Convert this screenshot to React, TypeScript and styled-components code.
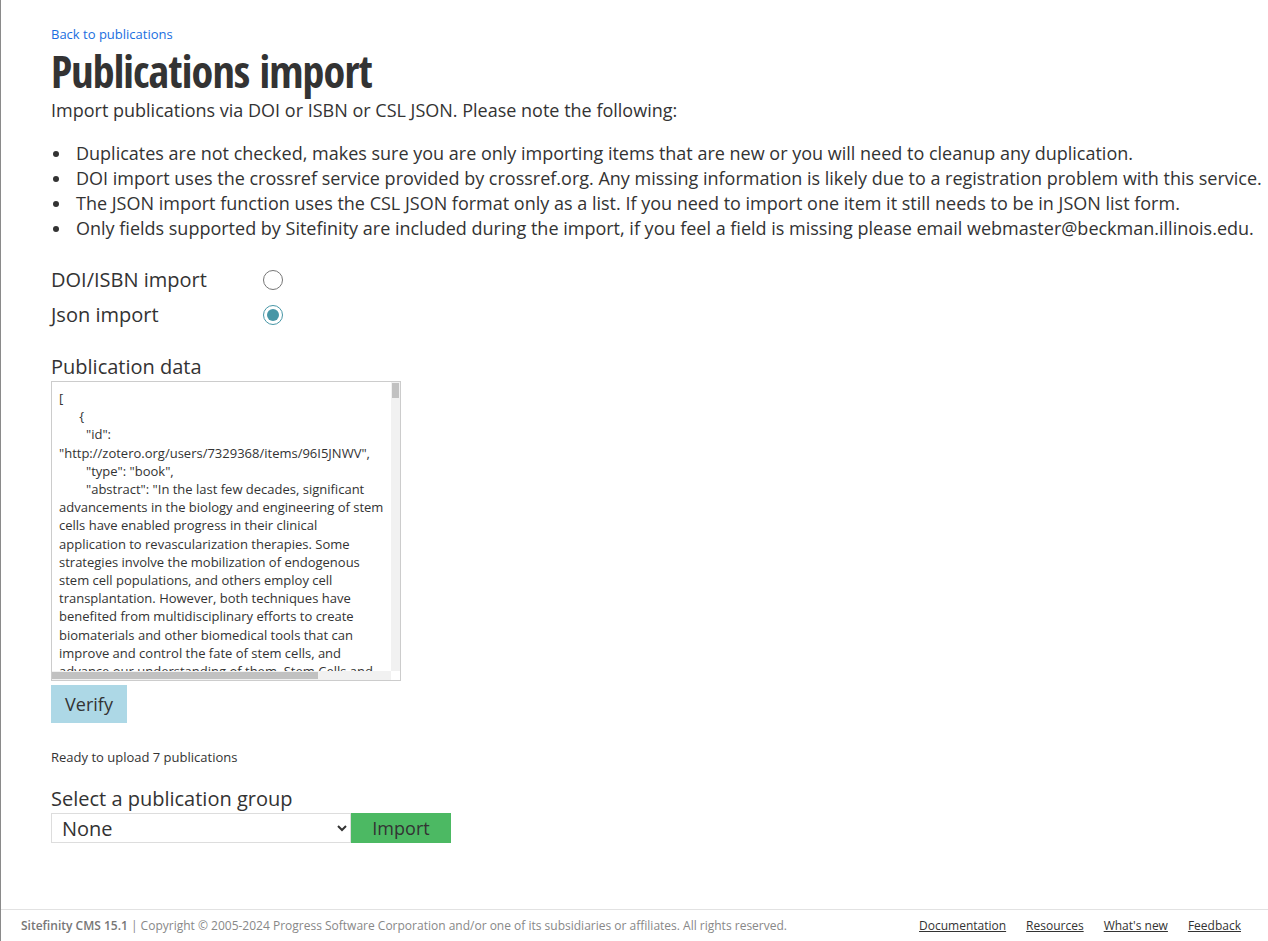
import React from "react";
import styled, { createGlobalStyle } from "styled-components";

const Global = createGlobalStyle`
  html, body { margin: 0; padding: 0; background: #fff; }
  body { font-family: "Open Sans", "Liberation Sans", sans-serif; color: #333; }
  * { box-sizing: border-box; }
`;

const Page = styled.div`
  min-height: 100vh;
  display: flex;
  flex-direction: column;
  border-left: 1px solid #8a8a8a;
`;

const Main = styled.main`
  flex: 1;
  padding: 25px 0 0 50px;
`;

const BackLink = styled.a`
  display: block;
  font-size: 13px;
  line-height: 18px;
  color: #1a6ee0;
  text-decoration: none;
`;

const Title = styled.h1`
  margin: 3px 0 2px;
  font-family: "Open Sans Condensed", "Open Sans", sans-serif;
  font-stretch: 75%;
  font-weight: 700;
  font-size: 44px;
  line-height: 50px;
  color: #333;
  letter-spacing: -0.85px;
`;

const Intro = styled.p`
  margin: 0;
  font-size: 18px;
  line-height: 25px;
`;

const Notes = styled.ul`
  margin: 18px 0 0;
  padding: 0;
  list-style: none;
  font-size: 18px;
  line-height: 25px;
`;

const Note = styled.li`
  display: flex;
  align-items: center;
  &::before {
    content: "";
    flex: none;
    width: 6px;
    height: 6px;
    border-radius: 50%;
    background: #333;
    margin: 1px 17px 0 2px;
  }
`;

const Options = styled.div`
  margin-top: 21px;
  display: flex;
  flex-direction: column;
`;

const OptionRow = styled.label`
  display: flex;
  align-items: center;
  height: 35px;
  font-size: 20px;
`;

const OptionText = styled.span`
  width: 212px;
`;

const Radio = styled.input.attrs({ type: "radio" })`
  appearance: none;
  margin: 0;
  width: 20px;
  height: 20px;
  border-radius: 50%;
  border: 1px solid #767676;
  background: #fff;
  display: grid;
  place-items: center;
  &:checked {
    border-color: #4796a6;
  }
  &:checked::after {
    content: "";
    width: 12px;
    height: 12px;
    border-radius: 50%;
    background: #4796a6;
  }
`;

const FieldLabel = styled.div<{ $top: number }>`
  margin-top: ${(p) => p.$top}px;
  font-size: 20px;
  line-height: 28px;
`;

const ScrollFrame = styled.div`
  width: 350px;
  height: 300px;
  border: 1px solid #ccc;
  display: grid;
  grid-template-columns: 1fr 9px;
  grid-template-rows: 1fr 9px;
  overflow: hidden;
`;

const DataArea = styled.textarea`
  display: block;
  width: 100%;
  height: 100%;
  margin: 0;
  padding: 7px 6px 0 7px;
  border: none;
  outline: none;
  font-family: "Open Sans", sans-serif;
  font-size: 13px;
  line-height: 18.2px;
  color: #333;
  resize: none;
  overflow: hidden;
  white-space: pre-wrap;
  tab-size: 8;
`;

const VTrack = styled.div`
  background: #f1f1f1;
  display: flex;
  flex-direction: column;
`;

const HTrack = styled.div`
  background: #f1f1f1;
  display: flex;
`;

const Thumb = styled.div<{ $len: number; $dir: "v" | "h" }>`
  background: #c1c1c1;
  ${(p) => (p.$dir === "v" ? `height: ${p.$len}px; margin: 1px 1px 0;` : `width: ${p.$len}px; margin: 1px 0;`)}
`;

const Corner = styled.div`
  background: #fff;
`;

const Button = styled.button<{ $bg: string; $w: number; $h: number }>`
  border: none;
  margin: 0;
  padding: 0;
  width: ${(p) => p.$w}px;
  height: ${(p) => p.$h}px;
  background: ${(p) => p.$bg};
  color: #333;
  font-family: "Open Sans", sans-serif;
  font-size: 18px;
`;

const VerifyWrap = styled.div`
  margin-top: 4px;
`;

const Status = styled.div`
  margin-top: 25px;
  font-size: 13px;
  line-height: 18px;
`;

const SelectRow = styled.div`
  display: flex;
`;

const Select = styled.select`
  width: 300px;
  height: 30px;
  margin: 0;
  padding: 0 4px 0 6px;
  border: 1px solid #ddd;
  background: #fff;
  color: #333;
  font-family: "Open Sans", sans-serif;
  font-size: 20px;
`;

const Footer = styled.footer`
  height: 32px;
  border-top: 1px solid #e2e2e2;
  display: flex;
  align-items: center;
  justify-content: space-between;
  padding: 0 27px 0 20px;
  font-size: 12px;
  color: #888;
`;

const Brand = styled.span`
  font-weight: 600;
  color: #777;
`;

const FooterLinks = styled.nav`
  display: flex;
  gap: 20px;
`;

const FooterLink = styled.a`
  color: #333;
  text-decoration: underline;
  font-size: 12px;
`;

const json = `[
      {
\t"id": "http://zotero.org/users/7329368/items/96I5JNWV",
\t"type": "book",
\t"abstract": "In the last few decades, significant advancements in the biology and engineering of stem cells have enabled progress in their clinical application to revascularization therapies. Some strategies involve the mobilization of endogenous stem cell populations, and others employ cell transplantation. However, both techniques have benefited from multidisciplinary efforts to create biomaterials and other biomedical tools that can improve and control the fate of stem cells, and advance our understanding of them. Stem Cells and Revascularization Therapies provides an overview of the latest research in this field.",
\t"ISBN": "978-1-4398-1929-3",
\t"title": "Stem Cells and Revascularization Therapies"
      }
]`;

export default function App() {
  return (
    <>
      <Global />
      <Page>
        <Main>
          <BackLink href="#">Back to publications</BackLink>
          <Title>Publications import</Title>
          <Intro>Import publications via DOI or ISBN or CSL JSON. Please note the following:</Intro>
          <Notes>
            <Note>Duplicates are not checked, makes sure you are only importing items that are new or you will need to cleanup any duplication.</Note>
            <Note>DOI import uses the crossref service provided by crossref.org. Any missing information is likely due to a registration problem with this service.</Note>
            <Note>The JSON import function uses the CSL JSON format only as a list. If you need to import one item it still needs to be in JSON list form.</Note>
            <Note>Only fields supported by Sitefinity are included during the import, if you feel a field is missing please email webmaster@beckman.illinois.edu.</Note>
          </Notes>
          <Options>
            <OptionRow>
              <OptionText>DOI/ISBN import</OptionText>
              <Radio name="mode" />
            </OptionRow>
            <OptionRow>
              <OptionText>Json import</OptionText>
              <Radio name="mode" defaultChecked />
            </OptionRow>
          </Options>
          <FieldLabel $top={21}>Publication data</FieldLabel>
          <ScrollFrame>
            <DataArea defaultValue={json} />
            <VTrack>
              <Thumb $dir="v" $len={15} />
            </VTrack>
            <HTrack>
              <Thumb $dir="h" $len={266} />
            </HTrack>
            <Corner />
          </ScrollFrame>
          <VerifyWrap>
            <Button $bg="#add8e6" $w={76} $h={38}>Verify</Button>
          </VerifyWrap>
          <Status>Ready to upload 7 publications</Status>
          <FieldLabel $top={19}>Select a publication group</FieldLabel>
          <SelectRow>
            <Select defaultValue="none">
              <option value="none">None</option>
            </Select>
            <Button $bg="#4cb963" $w={100} $h={30}>Import</Button>
          </SelectRow>
        </Main>
        <Footer>
          <span>
            <Brand>Sitefinity CMS 15.1</Brand> | Copyright © 2005-2024 Progress Software Corporation and/or one of its subsidiaries or affiliates. All rights reserved.
          </span>
          <FooterLinks>
            <FooterLink href="#">Documentation</FooterLink>
            <FooterLink href="#">Resources</FooterLink>
            <FooterLink href="#">What's new</FooterLink>
            <FooterLink href="#">Feedback</FooterLink>
          </FooterLinks>
        </Footer>
      </Page>
    </>
  );
}
